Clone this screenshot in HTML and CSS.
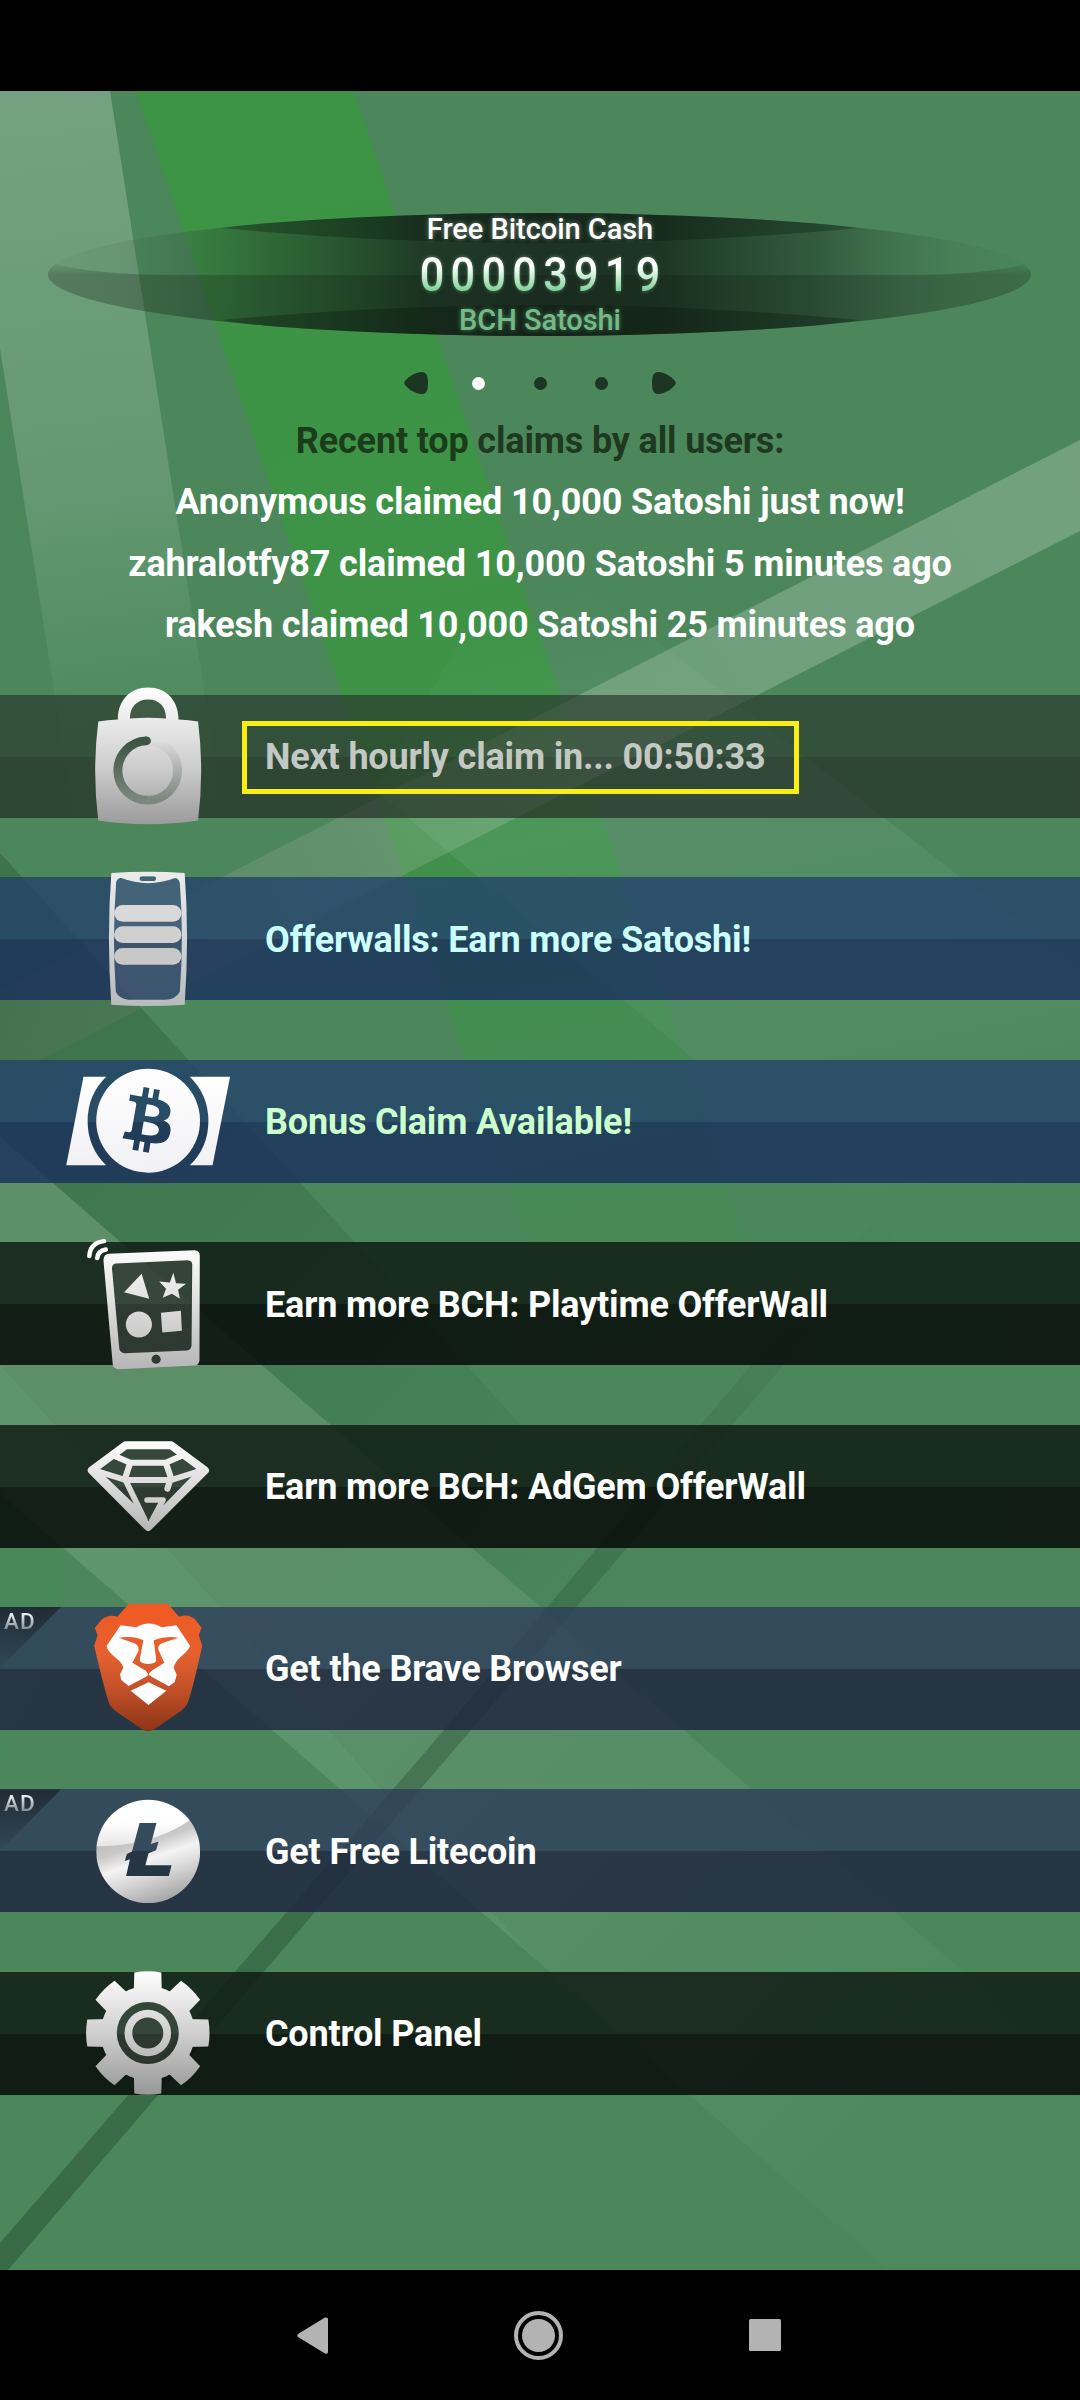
FILE: index.html
```html
<!DOCTYPE html>
<html lang="en">
<head>
    <meta charset="UTF-8">
    <meta name="viewport" content="width=device-width, initial-scale=1.0">
    <title>Free Bitcoin Cash</title>
    <link rel="stylesheet" href="styles.css">
</head>
<body>
    <div class="status-bar"></div>

    <main class="screen">
        <svg class="backdrop" viewBox="0 91 1080 2179" preserveAspectRatio="none">
            <defs>
                <linearGradient id="bgPanel" gradientUnits="userSpaceOnUse" x1="60" y1="91" x2="150" y2="820">
                    <stop offset="0" stop-color="#fff" stop-opacity=".23"/>
                    <stop offset=".55" stop-color="#fff" stop-opacity=".14"/>
                    <stop offset="1" stop-color="#8fd0a8" stop-opacity="0"/>
                </linearGradient>
                <linearGradient id="bgStrip" gradientUnits="userSpaceOnUse" x1="300" y1="91" x2="600" y2="1350">
                    <stop offset="0" stop-color="#3c9444"/>
                    <stop offset=".5" stop-color="#3d9346" stop-opacity=".95"/>
                    <stop offset="1" stop-color="#3d9346" stop-opacity="0"/>
                </linearGradient>
                <linearGradient id="bgBeam" gradientUnits="userSpaceOnUse" x1="1080" y1="480" x2="0" y2="1040">
                    <stop offset="0" stop-color="#fff" stop-opacity=".22"/>
                    <stop offset=".45" stop-color="#fff" stop-opacity=".19"/>
                    <stop offset="1" stop-color="#b98a90" stop-opacity=".1"/>
                </linearGradient>
                <linearGradient id="bgDark" gradientUnits="userSpaceOnUse" x1="0" y1="1000" x2="620" y2="1620">
                    <stop offset="0" stop-color="#1d3f22" stop-opacity=".28"/>
                    <stop offset=".6" stop-color="#1d4f32" stop-opacity=".16"/>
                    <stop offset="1" stop-color="#1d4f32" stop-opacity="0"/>
                </linearGradient>
                <linearGradient id="bgLight" gradientUnits="userSpaceOnUse" x1="0" y1="1300" x2="900" y2="2200">
                    <stop offset="0" stop-color="#e4c9d0" stop-opacity=".12"/>
                    <stop offset=".45" stop-color="#e6e6e6" stop-opacity=".09"/>
                    <stop offset="1" stop-color="#fff" stop-opacity=".015"/>
                </linearGradient>
                <linearGradient id="bgSoft" gradientUnits="userSpaceOnUse" x1="640" y1="560" x2="780" y2="1250">
                    <stop offset="0" stop-color="#cfe6ff" stop-opacity="0"/>
                    <stop offset=".35" stop-color="#cfe6ff" stop-opacity=".08"/>
                    <stop offset=".7" stop-color="#cfe6ff" stop-opacity=".04"/>
                    <stop offset="1" stop-color="#cfe6ff" stop-opacity="0"/>
                </linearGradient>
                <linearGradient id="bgLine" gradientUnits="userSpaceOnUse" x1="0" y1="2260" x2="900" y2="1200">
                    <stop offset="0" stop-color="#153320" stop-opacity=".34"/>
                    <stop offset=".5" stop-color="#153320" stop-opacity=".28"/>
                    <stop offset="1" stop-color="#153320" stop-opacity="0"/>
                </linearGradient>
            </defs>
            <path fill="url(#bgPanel)" d="M0 91H110L226 830H76L0 348Z"/>
            <path fill="url(#bgStrip)" d="M136 91H353L790 1365H570Z"/>
            <path fill="url(#bgSoft)" d="M375 790L520 535 1080 970V1385Z"/>
            <path fill="url(#bgBeam)" d="M1080 440V531L398 878 0 1080V990Z"/>
            <path fill="url(#bgDark)" d="M0 853L634 1549 900 1850V1920L451 1530 0 1137Z"/>
            <path fill="url(#bgLight)" d="M0 1137L472 1548 964 1972 1250 2270H888L540 1963 0 1493Z"/>
            <path fill="#7ee0a0" fill-opacity=".08" d="M0 1365L220 1607 450 1868 540 1963 0 1493Z"/>
            <path fill="#3f9b4f" fill-opacity=".12" d="M0 1493L66 1554Q50 1680 0 1760Z"/>
            <path fill="url(#bgLine)" d="M0 2243L427 1750 890 1200H925L454 1750 8 2270H0Z"/>
        </svg>

        <header class="balance">
            <svg class="balance-bg" viewBox="0 0 984 123">
                <defs>
                    <linearGradient id="plate">
                        <stop offset="0" stop-color="#3a6048" stop-opacity=".05"/>
                        <stop offset=".08" stop-color="#3a5a44" stop-opacity=".14"/>
                        <stop offset=".22" stop-color="#22402b" stop-opacity=".5"/>
                        <stop offset=".38" stop-color="#1a3020" stop-opacity=".88"/>
                        <stop offset=".5" stop-color="#1c3024" stop-opacity=".97"/>
                        <stop offset=".62" stop-color="#1a3020" stop-opacity=".94"/>
                        <stop offset=".78" stop-color="#22402b" stop-opacity=".62"/>
                        <stop offset=".92" stop-color="#3a6048" stop-opacity=".2"/>
                        <stop offset="1" stop-color="#3a6048" stop-opacity=".02"/>
                    </linearGradient>
                    <linearGradient id="plateTip" x2="0" y2="1">
                        <stop offset="0" stop-color="#10180f" stop-opacity="0"/>
                        <stop offset="1" stop-color="#10180f" stop-opacity=".24"/>
                    </linearGradient>
                    <clipPath id="plateClip"><ellipse cx="491.500" cy="61.500" rx="491.500" ry="61.500"/></clipPath>
                </defs>
                <g clip-path="url(#plateClip)">
                    <rect width="984" height="123" fill="url(#plate)"/>
                    <rect y="62" width="984" height="61" fill="#10180f" fill-opacity=".24"/>
                    <path d="M0 48Q30 60 110 62H0Z M984 48Q954 60 874 62H984Z" fill="url(#plateTip)"/>
                    <path d="M173 15Q492 45 811 15L700 0H284Z M173 107Q492 77 811 107L700 123H284Z" fill="#06140a" fill-opacity=".3"/>
                </g>
            </svg>
            <div class="balance-name">Free Bitcoin Cash</div>
            <div class="balance-value">00003919</div>
            <div class="balance-unit">BCH Satoshi</div>
        </header>

        <nav class="pager">
            <svg class="pager-arrow" viewBox="0 0 24 22"><path d="M0 11C2 6 11 0 18 0C23 0 24 5 24 11S23 22 18 22C11 22 2 16 0 11Z"/></svg>
            <span class="dots">
                <span class="dot dot-active"></span>
                <span class="dot"></span>
                <span class="dot"></span>
            </span>
            <svg class="pager-arrow" viewBox="0 0 24 22"><path d="M24 11C22 6 13 0 6 0C1 0 0 5 0 11S1 22 6 22C13 22 22 16 24 11Z"/></svg>
        </nav>

        <section class="claims">
            <p class="claims-title">Recent top claims by all users:</p>
            <p>Anonymous claimed 10,000 Satoshi just now!</p>
            <p>zahralotfy87 claimed 10,000 Satoshi 5 minutes ago</p>
            <p>rakesh claimed 10,000 Satoshi 25 minutes ago</p>
        </section>

        <section class="menu">
            <div class="row row-wait">
                <svg class="icon" viewBox="168 34.6 523 450" preserveAspectRatio="none">
                    <defs>
                        <linearGradient id="bagFill" x2="0" y2="1">
                            <stop offset="0" stop-color="#fff"/>
                            <stop offset=".2" stop-color="#eee"/>
                            <stop offset=".6" stop-color="#cbcbcb"/>
                            <stop offset="1" stop-color="#9b9b9b"/>
                        </linearGradient>
                        <linearGradient id="ringLeft" x2="0" y2="1">
                            <stop offset="0" stop-color="#3c5442"/>
                            <stop offset="1" stop-color="#7b877e"/>
                        </linearGradient>
                        <linearGradient id="ringRight" x2="0" y2="1">
                            <stop offset="0" stop-color="#98a09b" stop-opacity="0"/>
                            <stop offset="1" stop-color="#7b877e"/>
                        </linearGradient>
                    </defs>
                    <path fill="#fff" fill-opacity=".06" d="M377 148Q377 90 430 90Q482 90 482 148Z"/>
                    <path fill="url(#bagFill)" d="M342 150C342 92 378 54 430 54S518 92 518 150Q548 152 575 156Q593 305 575 453Q430 476 285 453Q267 305 285 156Q312 152 342 150ZM377 147Q430 142 482 147C482 112 462 90 430 90S377 112 377 147Z"/>
                    <path fill="none" stroke="url(#ringRight)" stroke-width="26" d="M430 214A85.500 89 0 0 1 430 392"/>
                    <path fill="none" stroke="url(#ringLeft)" stroke-width="26" d="M430 392A85.500 89 0 0 1 425 214"/>
                    <circle cx="425" cy="214" r="13" fill="#3c5442"/>
                </svg>
                <span class="label label-boxed">Next hourly claim in... 00:50:33</span>
            </div>

            <div class="row row-blue">
                <svg class="icon" viewBox="168 582 523 450" preserveAspectRatio="none">
                    <defs>
                        <linearGradient id="phoneFill" gradientUnits="userSpaceOnUse" x1="0" y1="604" x2="0" y2="1008">
                            <stop offset="0" stop-color="#ececec"/>
                            <stop offset=".5" stop-color="#d2d5d7"/>
                            <stop offset="1" stop-color="#b8bbbb"/>
                        </linearGradient>
                    </defs>
                    <path fill="#fff" fill-opacity=".11" d="M330 620H530V990H330Z"/>
                    <path fill="url(#phoneFill)" fill-rule="evenodd" d="M323 609Q430 602 536 609Q550 800 536 1004Q430 1012 323 1004Q309 800 323 609ZM337 636Q342 622 352 624Q430 655 508 624Q520 626 522 640Q534 800 522 965Q510 988 480 989H372Q345 985 336 965Q325 800 337 636ZM412 619Q405 619 405 626T412 633H446Q453 633 453 626T446 619Z"/>
                    <rect x="331" y="705" width="196" height="50" rx="25" fill="#d9d9d9"/>
                    <rect x="331" y="769" width="196" height="50" rx="25" fill="#d0d0d0"/>
                    <rect x="331" y="834" width="196" height="50" rx="25" fill="#c8c8c8"/>
                </svg>
                <span class="label label-cyan">Offerwalls: Earn more Satoshi!</span>
            </div>

            <div class="row row-blue">
                <svg class="icon" viewBox="168 49 523 450" preserveAspectRatio="none">
                    <defs>
                        <linearGradient id="coinFill" x2="0" y2="1">
                            <stop offset="0" stop-color="#fff"/>
                            <stop offset="1" stop-color="#f1f1f4"/>
                        </linearGradient>
                    </defs>
                    <path fill="url(#coinFill)" d="M242 141H308Q254 195 254 274T308 407H192Z"/>
                    <path fill="url(#coinFill)" d="M551 141H668L617 407H551Q605 353 605 274T551 141Z"/>
                    <g transform="translate(430 273) scale(12.580 13) rotate(-4) translate(-12 -12)">
                        <path fill="url(#coinFill)" d="M23.638 14.904c-1.602 6.430-8.113 10.340-14.542 8.736C2.670 22.050-1.244 15.525.362 9.105 1.962 2.670 8.475-1.243 14.900.358c6.430 1.605 10.342 8.115 8.738 14.548v-.002zm-6.350-4.613c.240-1.590-.974-2.450-2.640-3.030l.540-2.153-1.315-.330-.525 2.107c-.345-.087-.705-.167-1.064-.250l.526-2.127-1.320-.330-.540 2.165c-.285-.067-.565-.132-.840-.200l-1.815-.450-.350 1.407s.975.225.955.236c.535.136.630.486.615.766l-1.477 5.920c-.075.166-.240.406-.614.314.015.020-.960-.240-.960-.240l-.660 1.510 1.710.426.930.242-.540 2.190 1.320.327.540-2.170c.360.100.705.190 1.050.273l-.510 2.154 1.320.330.545-2.190c2.240.427 3.930.257 4.640-1.774.570-1.637-.030-2.580-1.217-3.196.854-.193 1.500-.760 1.680-1.930h.010zm-3.010 4.220c-.404 1.640-3.157.750-4.050.530l.720-2.900c.896.230 3.757.670 3.330 2.370zm.410-4.240c-.370 1.490-2.662.735-3.405.550l.654-2.640c.744.180 3.137.524 2.750 2.084v.006z"/>
                    </g>
                </svg>
                <span class="label label-mint">Bonus Claim Available!</span>
            </div>

            <div class="row row-dark">
                <svg class="icon" viewBox="168 596.5 523 450" preserveAspectRatio="none">
                    <defs>
                        <linearGradient id="tabFill" gradientUnits="userSpaceOnUse" x1="0" y1="640" x2="0" y2="1020">
                            <stop offset="0" stop-color="#fff"/>
                            <stop offset=".4" stop-color="#e4e4e4"/>
                            <stop offset="1" stop-color="#b5b5b5"/>
                        </linearGradient>
                    </defs>
                    <path fill="#fff" fill-opacity=".12" d="M325 695L557 688V962L346 970ZM436 975H470V1002H436Z"/>
                    <path fill="url(#tabFill)" fill-rule="evenodd" d="M316 671L565 660Q580 661 580 676L579 990Q578 1005 565 1006L345 1017Q328 1016 327 1002L300 690Q301 672 316 671ZM336 700L545 690Q558 691 558 703L556 946Q554 960 543 961L362 969Q348 968 346 955L325 714Q325 702 336 700ZM453 974A13 13 0 0 0 453 1001A13 13 0 0 0 453 974Z"/>
                    <g fill="url(#tabFill)">
                        <path d="M411 731L433 806 360 786Z"/>
                        <path d="M503 728L511 759 540 761 517 779 522 806 499 791 472 803 482 776 462 754 493 757Z"/>
                        <ellipse cx="403" cy="883" rx="38" ry="39"/>
                        <path d="M467 848L525 842 528 902 471 907Z"/>
                    </g>
                    <path fill="none" stroke="#fff" stroke-width="13" stroke-linecap="round" d="M259 678Q261 638 302 633M282 684Q284 662 307 658"/>
                </svg>
                <span class="label">Earn more BCH: Playtime OfferWall</span>
            </div>

            <div class="row row-dark">
                <svg class="icon" viewBox="168 64 523 450" preserveAspectRatio="none">
                    <defs>
                        <linearGradient id="gemFill" gradientUnits="userSpaceOnUse" x1="0" y1="155" x2="0" y2="425">
                            <stop offset="0" stop-color="#fff"/>
                            <stop offset="1" stop-color="#b5b5b5"/>
                        </linearGradient>
                    </defs>
                    <path fill="#fff" fill-opacity=".12" d="M363 167H498L596 242 430 412 266 242Z"/>
                    <g fill="none" stroke="url(#gemFill)" stroke-linejoin="round" stroke-linecap="round">
                        <path stroke-width="24" d="M364 167H497L595 242 430 412 266 242Z"/>
                        <path stroke-width="18" d="M334 200L378 219H481L524 200M378 219L363 266M481 219L496 264 486 297M280 244L364 271H497L580 244"/>
                        <path stroke-width="17" d="M290 257L402 368M364 271L420 390M572 256L448 388M427 331H473L440 395"/>
                    </g>
                </svg>
                <span class="label">Earn more BCH: AdGem OfferWall</span>
            </div>

            <div class="row row-ad">
                <div class="ad-flag"><span class="ad-text">AD</span></div>
                <svg class="icon" viewBox="168 611 523 450" preserveAspectRatio="none">
                    <defs>
                        <linearGradient id="lionFill" gradientUnits="userSpaceOnUse" x1="0" y1="644" x2="0" y2="1026">
                            <stop offset="0" stop-color="#f15a22"/>
                            <stop offset=".4" stop-color="#e5602f"/>
                            <stop offset=".65" stop-color="#c5522a"/>
                            <stop offset="1" stop-color="#8c3415"/>
                        </linearGradient>
                    </defs>
                    <path fill="url(#lionFill)" d="M374 643H487L520 682Q547 672 566 690L585 715 577 738 587 769Q562 888 546 938Q540 954 520 969L444 1022Q430 1030 416 1022L340 969Q320 954 315 938Q298 880 273 769L283 738 275 715 296 690Q316 673 340 682Z"/>
                    <path fill="#fff" d="M350 708L395 714Q431 691 470 714L512 708 552 770Q548 782 524 803Q508 818 504 835L513 856 507 878 490 891 440 862Q431 852 424 862L373 890 352 872 348 855 358 835Q354 818 332 802Q312 785 309 770ZM431 879L483 904 431 947 379 904Z"/>
                    <path fill="url(#lionFill)" d="M344 745Q390 738 416 753L406 808Q403 822 430 824Q457 822 453 808L446 753Q480 739 518 745L470 762Q456 768 460 782L477 820 440 844Q431 850 431 862Q430 850 423 844L384 820 402 785Q404 769 390 762Z"/>
                </svg>
                <span class="label">Get the Brave Browser</span>
            </div>

            <div class="row row-ad">
                <div class="ad-flag"><span class="ad-text">AD</span></div>
                <svg class="icon" viewBox="168 78.3 523 450" preserveAspectRatio="none">
                    <defs>
                        <linearGradient id="ltcBase" x1=".4" y1=".35" x2=".62" y2="1">
                            <stop offset="0" stop-color="#c2c0c0"/>
                            <stop offset=".14" stop-color="#cbcaca"/>
                            <stop offset=".36" stop-color="#f4f4f4"/>
                            <stop offset=".55" stop-color="#dedede"/>
                            <stop offset="1" stop-color="#a3a3a3"/>
                        </linearGradient>
                        <linearGradient id="ltcShine" x2="0" y2="1">
                            <stop offset="0" stop-color="#fff"/>
                            <stop offset=".5" stop-color="#fff"/>
                            <stop offset="1" stop-color="#e6e6e6"/>
                        </linearGradient>
                        <mask id="ltcMask">
                            <ellipse cx="430" cy="304.5" rx="151" ry="155" fill="#fff"/>
                            <path fill="#000" d="M405 219H454L438 282 460 275 453 301 431 310 422 346H498L490 378H366L377 328 362 333 368 312 383 305Z"/>
                        </mask>
                    </defs>
                    <g mask="url(#ltcMask)">
                        <rect x="279" y="149" width="302" height="311" fill="url(#ltcBase)"/>
                        <path fill="url(#ltcShine)" d="M270 289Q440 290 552 210L590 140H270Z"/>
                    </g>
                </svg>
                <span class="label">Get Free Litecoin</span>
            </div>

            <div class="row row-dark">
                <svg class="icon" viewBox="0 0 180 150">
                    <defs>
                        <linearGradient id="gearFill" x2="0" y2="1">
                            <stop offset="0" stop-color="#fff"/>
                            <stop offset=".5" stop-color="#cfcfcf"/>
                            <stop offset="1" stop-color="#979797"/>
                        </linearGradient>
                        <path id="tooth" d="M-14 -40L-13.500 -60.500Q0 -63 13.500 -60.500L14 -40Z"/>
                        <mask id="gearMask">
                            <g transform="translate(89.800 75)" fill="#fff">
                                <circle r="47"/>
                                <use href="#tooth"/>
                                <use href="#tooth" transform="rotate(45)"/>
                                <use href="#tooth" transform="rotate(90)"/>
                                <use href="#tooth" transform="rotate(135)"/>
                                <use href="#tooth" transform="rotate(180)"/>
                                <use href="#tooth" transform="rotate(225)"/>
                                <use href="#tooth" transform="rotate(270)"/>
                                <use href="#tooth" transform="rotate(315)"/>
                                <circle r="31" fill="#000"/>
                                <circle r="23.300"/>
                                <circle r="15.500" fill="#000"/>
                            </g>
                        </mask>
                    </defs>
                    <circle cx="89.800" cy="75" r="32" fill="#fff" fill-opacity=".12"/>
                    <rect x="28" y="13" width="124" height="124" fill="url(#gearFill)" mask="url(#gearMask)"/>
                </svg>
                <span class="label">Control Panel</span>
            </div>
        </section>
    </main>

    <footer class="nav-bar">
        <svg width="31" height="37" viewBox="0 0 31 37"><path d="M1 17L28 .5Q31 0 31 2V35Q31 37.500 28 36.500L1 20Q-.5 18.500 1 17Z"/></svg>
        <svg width="49" height="49" viewBox="0 0 49 49"><circle cx="24.500" cy="24.500" r="22.500" class="nav-ring"/><circle cx="24.500" cy="24.500" r="16.500"/></svg>
        <svg width="32" height="32" viewBox="0 0 32 32"><rect width="32" height="32" rx="1.500"/></svg>
    </footer>
</body>
</html>
```
FILE: styles.css
```css
* {
    box-sizing: border-box;
}

body {
    margin: 0;
    width: 1080px;
    height: 2400px;
    display: flex;
    flex-direction: column;
    background-color: #000;
    font-family: Roboto, "Liberation Sans", sans-serif;
    color: #fff;
    overflow: hidden;
}

.status-bar {
    height: 91px;
}

.screen {
    position: relative;
    height: 2179px;
    display: flex;
    flex-direction: column;
    align-items: center;
    background-color: #4b875b;
    overflow: hidden;
}

.backdrop {
    position: absolute;
    top: 0;
    left: 0;
    width: 100%;
    height: 100%;
}

/* balance plate */
.balance {
    position: relative;
    width: 984px;
    height: 123px;
    margin-top: 122px;
    text-align: center;
    font-weight: 500;
}

.balance-bg {
    position: absolute;
    top: 0;
    left: 0;
    width: 100%;
    height: 100%;
}

.balance-name,
.balance-value,
.balance-unit {
    position: relative;
}

.balance-name,
.balance-unit {
    font-size: 29px;
    line-height: 33px;
    letter-spacing: -0.05px;
}

.balance-name {
    text-shadow: 0 0 5px rgba(255, 255, 255, 0.4);
}

.balance-value {
    font-size: 48px;
    line-height: 58px;
    letter-spacing: 7px;
    text-indent: 7px;
    transform: scaleX(0.9);
    background: linear-gradient(#fff 35%, #7bd096 78%);
    -webkit-background-clip: text;
    background-clip: text;
    color: transparent;
    filter: drop-shadow(0 0 2px rgba(160, 240, 185, 0.45));
}

.balance-unit {
    color: #74ba88;
    text-shadow: 0 0 5px rgba(116, 186, 136, 0.6);
}

.pager {
    position: relative;
    display: flex;
    align-items: center;
    justify-content: space-between;
    width: 272px;
    height: 22px;
    margin-top: 36px;
}

.pager-arrow {
    width: 24px;
    height: 22px;
    fill: #1d3523;
}

.dots {
    display: flex;
    gap: 48.5px;
}

.dot {
    width: 13px;
    height: 13px;
    border-radius: 50%;
    background-color: #1d3523;
}

.dot-active {
    background-color: #fff;
}

.claims {
    position: relative;
    margin-top: 17px;
    height: 284px;
    text-align: center;
    font-size: 36px;
    font-weight: 700;
    line-height: 61.3px;
    letter-spacing: -0.16px;
}

.claims p {
    margin: 0;
}

.claims .claims-title {
    color: rgba(18, 36, 16, 0.8);
}

/* menu rows */
.menu {
    position: relative;
    width: 100%;
    display: flex;
    flex-direction: column;
    gap: 59.52px;
}

.row {
    position: relative;
    height: 122.9px;
    padding-left: 58px;
    display: flex;
    align-items: center;
}

.row-wait {
    background: linear-gradient(rgba(38, 51, 41, 0.65) 50%, rgba(31, 35, 31, 0.65) 50%);
}

.row-blue {
    background: linear-gradient(rgba(35, 66, 107, 0.8) 50%, rgba(25, 46, 92, 0.8) 50%);
}

.row-dark {
    background: linear-gradient(rgba(14, 25, 18, 0.82) 50%, rgba(3, 5, 5, 0.82) 50%);
}

.row-ad {
    background: linear-gradient(rgba(45, 60, 90, 0.8) 50%, rgba(29, 33, 62, 0.8) 50%);
}

.icon {
    flex: none;
    width: 180px;
    height: 150px;
}

.label {
    margin-left: 27px;
    padding-top: 2px;
    font-size: 36px;
    font-weight: 700;
    line-height: 42px;
    letter-spacing: -0.18px;
    white-space: nowrap;
}

.label-boxed {
    width: 557px;
    height: 73px;
    margin-top: 2px;
    margin-left: 4px;
    padding-top: 0;
    padding-left: 18px;
    border: 5px solid #f9ef14;
    line-height: 63px;
    color: #c4c8c3;
}

.label-cyan {
    color: #ccffff;
}

.label-mint {
    color: #ccffcc;
}

.ad-flag {
    position: absolute;
    top: 0;
    left: 0;
    width: 61px;
    height: 61px;
    padding-top: 1px;
    padding-left: 4px;
    background: linear-gradient(rgba(20, 22, 28, 0.6), rgba(20, 30, 36, 0.05));
    clip-path: polygon(0 0, 100% 0, 0 100%);
}

.ad-text {
    font-size: 22.5px;
    font-weight: 500;
    line-height: 26px;
    letter-spacing: 1px;
    background: linear-gradient(#e8ecee 25%, #7e878d 85%);
    -webkit-background-clip: text;
    background-clip: text;
    color: transparent;
}

.nav-bar {
    height: 130px;
    padding-left: 297px;
    display: flex;
    align-items: center;
    gap: 186px;
    fill: #b3b3b3;
}

.nav-ring {
    fill: none;
    stroke: #b3b3b3;
    stroke-width: 4px;
}
```
